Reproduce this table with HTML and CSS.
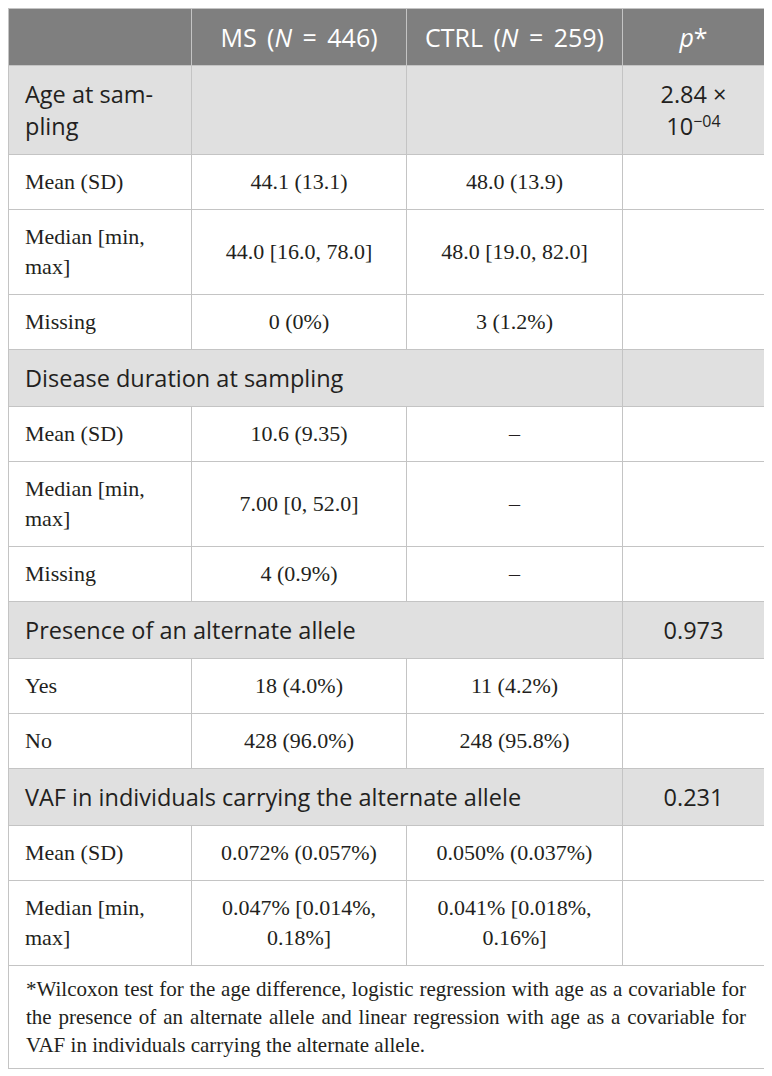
FILE: index.html
```html
<!DOCTYPE html>
<html lang="en">

<head>
  <title>Table</title>
  <link rel="stylesheet" href="styles.css">
</head>

<body>
  <table class="table">
    <colgroup>
      <col class="col-label">
      <col class="col-ms">
      <col class="col-ctrl">
      <col class="col-p">
    </colgroup>
    <thead>
      <tr>
        <th></th>
        <th>MS (<i>N</i> = 446)</th>
        <th>CTRL (<i>N</i> = 259)</th>
        <th><i>p</i>*</th>
      </tr>
    </thead>
    <tbody>
      <tr class="group">
        <td>Age at sam&shy;pling</td>
        <td></td>
        <td></td>
        <td class="center">2.84 ×<br>10<sup>−04</sup></td>
      </tr>
      <tr>
        <td>Mean (SD)</td>
        <td class="center">44.1 (13.1)</td>
        <td class="center">48.0 (13.9)</td>
        <td></td>
      </tr>
      <tr>
        <td>Median [min, max]</td>
        <td class="center">44.0 [16.0, 78.0]</td>
        <td class="center">48.0 [19.0, 82.0]</td>
        <td></td>
      </tr>
      <tr>
        <td>Missing</td>
        <td class="center">0 (0%)</td>
        <td class="center">3 (1.2%)</td>
        <td></td>
      </tr>
      <tr class="group">
        <td colspan="3">Disease duration at sampling</td>
        <td></td>
      </tr>
      <tr>
        <td>Mean (SD)</td>
        <td class="center">10.6 (9.35)</td>
        <td class="center">–</td>
        <td></td>
      </tr>
      <tr>
        <td>Median [min, max]</td>
        <td class="center">7.00 [0, 52.0]</td>
        <td class="center">–</td>
        <td></td>
      </tr>
      <tr>
        <td>Missing</td>
        <td class="center">4 (0.9%)</td>
        <td class="center">–</td>
        <td></td>
      </tr>
      <tr class="group">
        <td colspan="3">Presence of an alternate allele</td>
        <td class="center">0.973</td>
      </tr>
      <tr>
        <td>Yes</td>
        <td class="center">18 (4.0%)</td>
        <td class="center">11 (4.2%)</td>
        <td></td>
      </tr>
      <tr>
        <td>No</td>
        <td class="center">428 (96.0%)</td>
        <td class="center">248 (95.8%)</td>
        <td></td>
      </tr>
      <tr class="group">
        <td colspan="3">VAF in individuals carrying the alternate allele</td>
        <td class="center">0.231</td>
      </tr>
      <tr>
        <td>Mean (SD)</td>
        <td class="center">0.072% (0.057%)</td>
        <td class="center">0.050% (0.037%)</td>
        <td></td>
      </tr>
      <tr>
        <td>Median [min, max]</td>
        <td class="center">0.047% [0.014%, 0.18%]</td>
        <td class="center">0.041% [0.018%, 0.16%]</td>
        <td></td>
      </tr>
    </tbody>
    <tfoot>
      <tr>
        <td colspan="4" class="note">*Wilcoxon test for the age difference, logistic regression with age as a covariable for the presence of an alternate allele and linear regression with age as a covariable for VAF in individuals carrying the alternate allele.</td>
      </tr>
    </tfoot>
  </table>
</body>

</html>
```

FILE: styles.css
```css
body {
  margin: 8px;
  background: #fff;
  color: #231f20;
  font-family: "Liberation Serif", "Times New Roman", serif;
}

.table {
  width: 756px;
  border-collapse: collapse;
  table-layout: fixed;
}

.col-label {
  width: 183px;
}

.col-ms {
  width: 215px;
}

.col-ctrl {
  width: 216px;
}

.col-p {
  width: 142px;
}

.table td,
.table th {
  border: 1px solid #c4c4c4;
  padding: 12px 16px;
  font-size: 22px;
  line-height: 30px;
  text-align: left;
  vertical-align: middle;
}

.table thead th {
  background-color: #7f7f7f;
  color: #fff;
  font-family: "Open Sans", sans-serif;
  font-weight: 400;
  font-size: 25px;
  line-height: 32px;
  word-spacing: 4px;
  text-align: center;
}

.table .group td {
  background-color: #e0e0e0;
  font-family: "Open Sans", sans-serif;
  font-size: 23.5px;
  line-height: 32px;
  vertical-align: top;
}

.table .center,
.table .group .center {
  text-align: center;
}

sup {
  font-size: 0.68em;
  line-height: 0;
  vertical-align: 0.5em;
}

.table .note {
  font-size: 21px;
  line-height: 28px;
  padding: 9px 18px 9px 17px;
  text-align: justify;
}
```
